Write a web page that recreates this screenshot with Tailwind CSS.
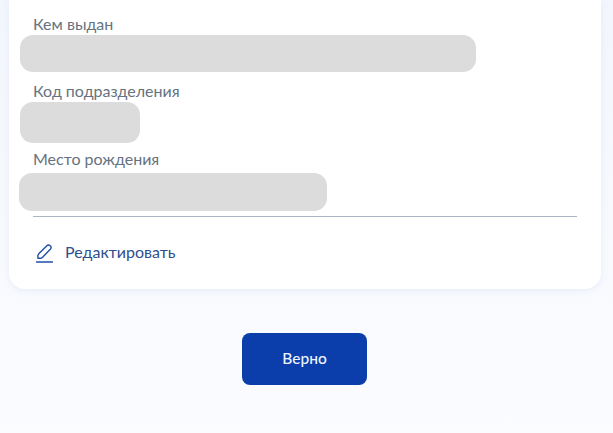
<!DOCTYPE html>
<html lang="ru">
<head>
<meta charset="utf-8">
<script src="https://cdn.jsdelivr.net/npm/@tailwindcss/browser@4"></script>
</head>
<body class="m-0 overflow-hidden">
<main class="w-[613px] h-[433px] overflow-hidden flex flex-col items-center bg-gradient-to-b from-[#f3f6fc] to-[#fbfcff] font-['Lato','Liberation_Sans',sans-serif]">
  <section class="w-[592px] h-[289px] ml-[-3px] shrink-0 bg-white rounded-b-[16px] shadow-[0_2px_6px_rgba(190,205,230,0.25)] pl-[24px] pr-[24px] flex flex-col">
    <p class="mt-[13px] h-[22px] leading-[21px] text-[16px] text-[#66727f]">Кем выдан</p>
    <div class="ml-[-13px] w-[456px] h-[37px] rounded-[13px] bg-[#dcdcdc]"></div>
    <p class="mt-[8px] h-[22px] leading-[22px] text-[16px] text-[#66727f]">Код подразделения</p>
    <div class="ml-[-13px] w-[120px] h-[41px] rounded-[13px] bg-[#dcdcdc]"></div>
    <p class="mt-[6px] h-[24px] leading-[20px] text-[16px] text-[#66727f]">Место рождения</p>
    <div class="ml-[-14px] w-[308px] h-[38px] rounded-[13px] bg-[#dcdcdc]"></div>
    <div class="mt-[5px] h-px w-[544px] bg-[#a9b6c4]"></div>
    <a class="mt-[25px] flex items-center gap-[12px] ml-[3px] h-[22px] text-[16px] text-[#2d4f8f]">
      <svg class="w-[17px] h-[19px]" viewBox="0 0 17 19" fill="none" stroke-width="1.4" stroke-linecap="round" stroke-linejoin="round">
        <path d="M10.6 2c1-1 2.6-1.1 3.6-.2s1 2.5.1 3.5L6.6 13.2c-.7.7-1.6 1.1-2.6 1.1H1.9v-2.2c0-1 .4-1.9 1.1-2.6L10.6 2Z" stroke="#1f4fa8"/>
        <path d="M.6 18h16" stroke="#1f4fa8"/>
      </svg>
      <span class="relative top-[-1px] font-normal">Редактировать</span>
    </a>
  </section>
  <button class="mt-[44px] ml-[-4px] w-[125px] h-[52px] shrink-0 rounded-[8px] bg-[#0b3eaa] text-[#eef4ff] text-[15.5px] font-medium">Верно</button>
</main>
</body>
</html>
